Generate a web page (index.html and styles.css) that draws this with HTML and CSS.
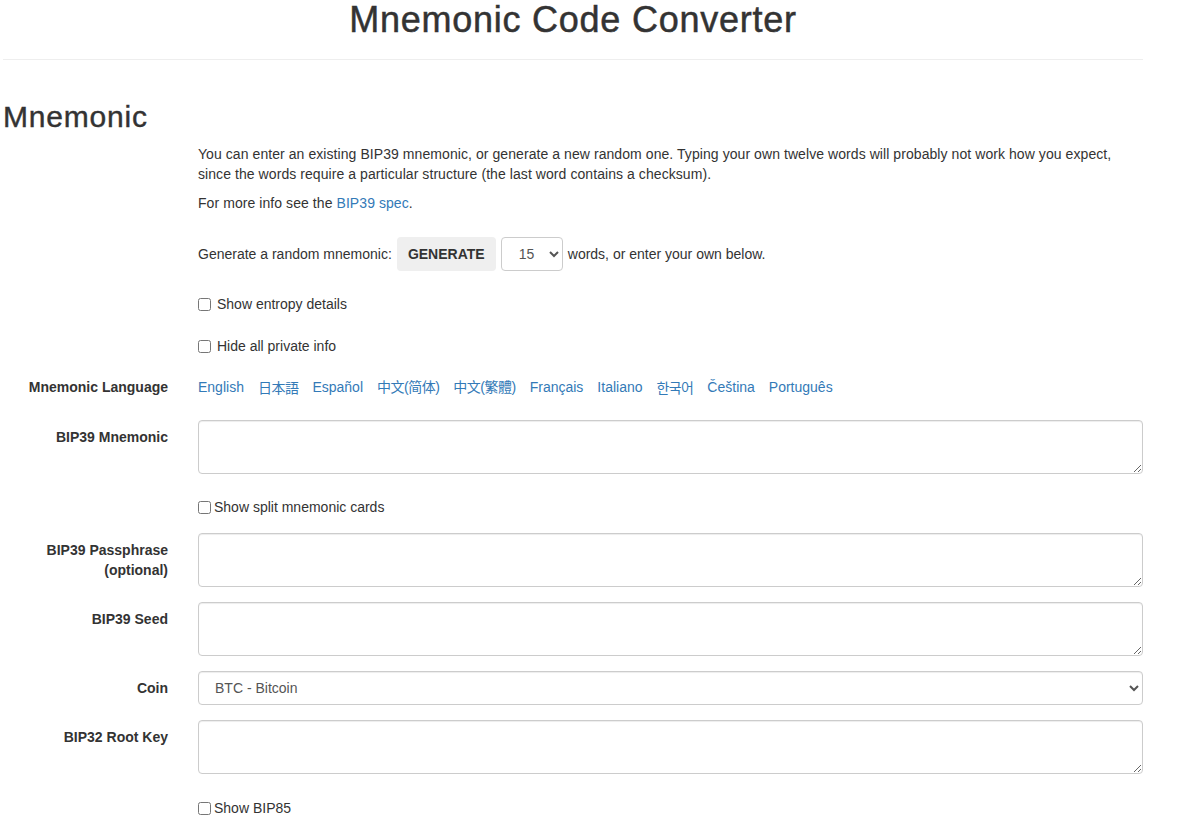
FILE: index.html
```html
<!DOCTYPE html>
<html lang="en">
<head>
<meta charset="utf-8">
<title>Mnemonic Code Converter</title>
<link rel="stylesheet" href="styles.css">
</head>
<body>
<div class="container">
  <h1 class="title">Mnemonic Code Converter</h1>
  <hr class="divider">
  <h2 class="section-title">Mnemonic</h2>

  <div class="row row-intro">
    <div class="label"></div>
    <div class="field">
      <p class="intro">You can enter an existing BIP39 mnemonic, or generate a new random one. Typing your own twelve words will probably not work how you expect, since the words require a particular structure (the last word contains a checksum).</p>
      <p class="intro">For more info see the <a href="#">BIP39 spec</a>.</p>
    </div>
  </div>

  <div class="row row-generate">
    <div class="label"></div>
    <div class="field generate">
      <span>Generate a random mnemonic:</span>
      <button class="btn">GENERATE</button>
      <select class="strength">
        <option>15</option>
      </select>
      <span>words, or enter your own below.</span>
    </div>
  </div>

  <div class="row row-check1">
    <div class="label"></div>
    <div class="field"><label class="check"><input type="checkbox"><span>Show entropy details</span></label></div>
  </div>

  <div class="row row-check2">
    <div class="label"></div>
    <div class="field"><label class="check"><input type="checkbox"><span>Hide all private info</span></label></div>
  </div>

  <div class="row row-lang">
    <div class="label label-plain">Mnemonic Language</div>
    <div class="field languages">
      <a href="#">English</a>
      <a href="#" lang="ja">日本語</a>
      <a href="#">Español</a>
      <a href="#" lang="zh-CN">中文(简体)</a>
      <a href="#" lang="zh-TW">中文(繁體)</a>
      <a href="#">Français</a>
      <a href="#">Italiano</a>
      <a href="#" lang="ko">한국어</a>
      <a href="#">Čeština</a>
      <a href="#">Português</a>
    </div>
  </div>

  <div class="row row-mnemonic">
    <div class="label">BIP39 Mnemonic</div>
    <div class="field"><textarea class="control"></textarea></div>
  </div>

  <div class="row row-split">
    <div class="label"></div>
    <div class="field"><label class="check check-inline"><input type="checkbox"><span>Show split mnemonic cards</span></label></div>
  </div>

  <div class="row row-pass">
    <div class="label">BIP39 Passphrase<br>(optional)</div>
    <div class="field"><textarea class="control"></textarea></div>
  </div>

  <div class="row row-tight">
    <div class="label">BIP39 Seed</div>
    <div class="field"><textarea class="control"></textarea></div>
  </div>

  <div class="row row-tight">
    <div class="label">Coin</div>
    <div class="field">
      <select class="control coin">
        <option>BTC - Bitcoin</option>
      </select>
    </div>
  </div>

  <div class="row row-tight">
    <div class="label">BIP32 Root Key</div>
    <div class="field"><textarea class="control"></textarea></div>
  </div>

  <div class="row row-bip85">
    <div class="label"></div>
    <div class="field"><label class="check check-inline"><input type="checkbox"><span>Show BIP85</span></label></div>
  </div>
</div>
</body>
</html>
```

FILE: styles.css
```css
html, body {
  margin: 0;
  padding: 0;
  background: #fff;
}

body {
  font-family: "Liberation Sans", Arial, Helvetica, sans-serif;
  font-size: 14px;
  line-height: 20px;
  color: #333;
}

a {
  color: #337ab7;
  text-decoration: none;
}

.container {
  width: 1140px;
  margin-left: 3px;
}

.title {
  margin: 0;
  font-size: 36px;
  line-height: 40px;
  font-weight: 500;
  letter-spacing: 0.75px;
  -webkit-text-stroke: 0.5px #333;
  text-align: center;
  color: #333;
}

.divider {
  margin: 19px 0 0;
  border: 0;
  border-top: 1px solid #eee;
  height: 0;
}

.section-title {
  margin: 40px 0 11px;
  font-size: 30px;
  line-height: 33px;
  font-weight: 500;
  letter-spacing: 0.8px;
  -webkit-text-stroke: 0.4px #333;
}

.row {
  display: grid;
  grid-template-columns: 165px 945px;
  column-gap: 30px;
}

.label {
  text-align: right;
  font-weight: bold;
  padding-top: 7px;
}

.label-plain {
  padding-top: 0;
}

.intro {
  margin: 0 0 9px;
  letter-spacing: 0.07px;
}

.row-generate { margin-top: 15px; }
.row-check1 { margin-top: 23px; }
.row-check2 { margin-top: 22px; }
.row-lang { margin-top: 21px; }
.row-mnemonic { margin-top: 23px; }
.row-split { margin-top: 23px; }
.row-pass { margin-top: 16px; }
.row-tight { margin-top: 15px; }
.row-bip85 { margin-top: 24px; }

.generate {
  display: flex;
  align-items: center;
  gap: 5px;
  height: 34px;
}

.btn {
  font-family: inherit;
  font-size: 14px;
  font-weight: bold;
  color: #333;
  background: #efefef;
  border: 0;
  border-radius: 4px;
  height: 34px;
  width: 99px;
  padding: 0;
}

.strength {
  font-family: inherit;
  font-size: 14px;
  color: #555;
  width: 62px;
  height: 34px;
  border: 1px solid #ccc;
  border-radius: 4px;
  background: #fff;
  padding: 0 6px 0 13px;
}

.check {
  display: flex;
  align-items: center;
  gap: 6px;
}

.check input {
  width: 13px;
  height: 13px;
  margin: 0;
}

.check-inline {
  gap: 3px;
}

.languages {
  display: flex;
  gap: 14px;
}

.languages a:lang(ja) { font-family: "Noto Sans CJK JP", sans-serif; letter-spacing: -0.5px; }
.languages a:lang(zh-CN) { font-family: "Liberation Sans", "Noto Sans CJK SC", sans-serif; letter-spacing: -0.5px; }
.languages a:lang(zh-TW) { font-family: "Liberation Sans", "Noto Sans CJK TC", sans-serif; letter-spacing: -0.5px; }
.languages a:lang(ko) { font-family: "Noto Sans CJK KR", sans-serif; letter-spacing: -0.6px; }

.control {
  display: block;
  box-sizing: border-box;
  width: 945px;
  height: 54px;
  margin: 0;
  padding: 6px 12px;
  font-family: inherit;
  font-size: 14px;
  line-height: 20px;
  color: #555;
  background: #fff;
  border: 1px solid #ccc;
  border-radius: 4px;
  box-shadow: inset 0 1px 1px rgba(0, 0, 0, 0.075);
  resize: vertical;
}

.coin {
  height: 34px;
  padding: 6px 8px 6px 12px;
}
```
